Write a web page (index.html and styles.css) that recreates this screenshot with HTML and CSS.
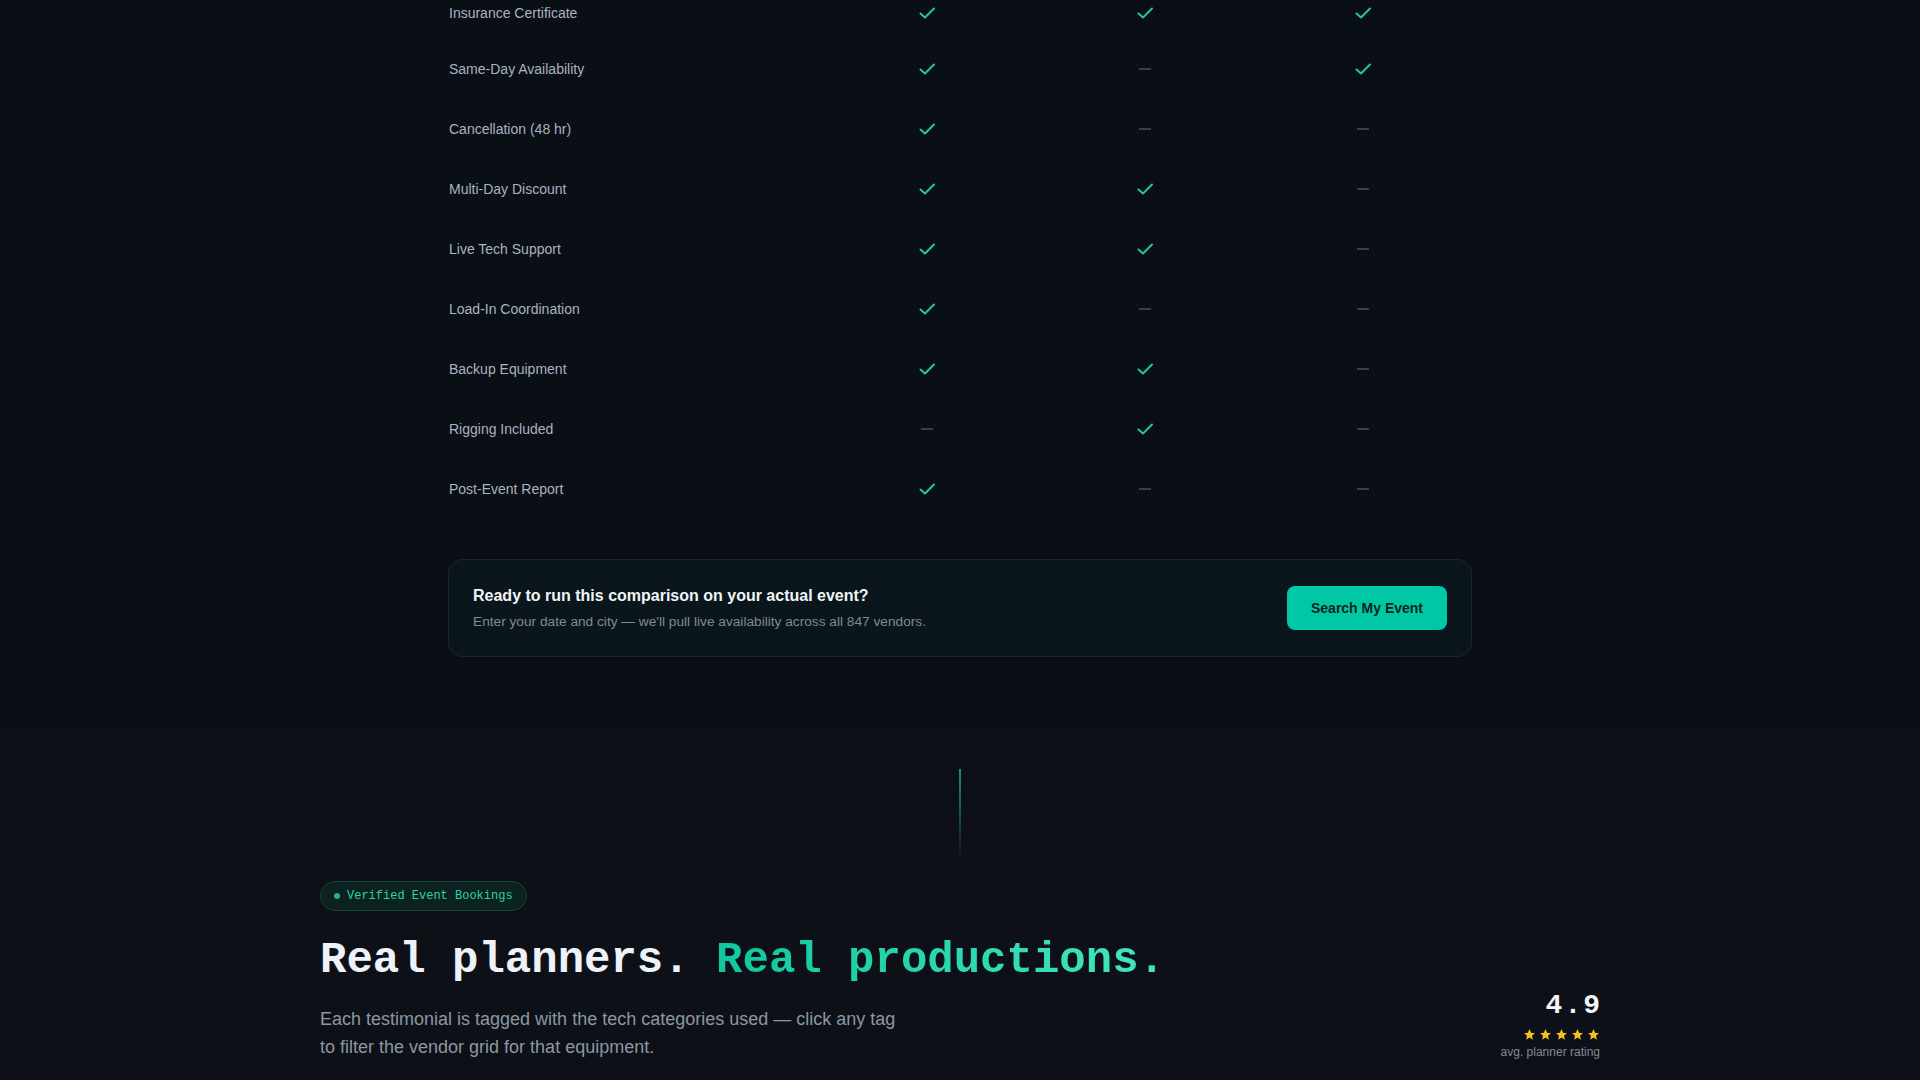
FILE: index.html
```html
<!DOCTYPE html>
<html lang="en">
<head>
    <meta charset="utf-8">
    <meta name="viewport" content="width=device-width, initial-scale=1">
    <title>Event Tech Vendors</title>
    <link rel="stylesheet" href="styles.css">
</head>
<body>
    <section class="compare">
        <div class="grid">
            <div class="row">
                <span class="feat">Insurance Certificate</span>
                <span class="cell"><svg class="yes" viewBox="0 0 16 16"><polyline points="1.5,8.5 6,12.5 15,3.5"/></svg></span>
                <span class="cell"><svg class="yes" viewBox="0 0 16 16"><polyline points="1.5,8.5 6,12.5 15,3.5"/></svg></span>
                <span class="cell"><svg class="yes" viewBox="0 0 16 16"><polyline points="1.5,8.5 6,12.5 15,3.5"/></svg></span>
            </div>
            <div class="row">
                <span class="feat">Same-Day Availability</span>
                <span class="cell"><svg class="yes" viewBox="0 0 16 16"><polyline points="1.5,8.5 6,12.5 15,3.5"/></svg></span>
                <span class="cell"><i class="no"></i></span>
                <span class="cell"><svg class="yes" viewBox="0 0 16 16"><polyline points="1.5,8.5 6,12.5 15,3.5"/></svg></span>
            </div>
            <div class="row">
                <span class="feat">Cancellation (48 hr)</span>
                <span class="cell"><svg class="yes" viewBox="0 0 16 16"><polyline points="1.5,8.5 6,12.5 15,3.5"/></svg></span>
                <span class="cell"><i class="no"></i></span>
                <span class="cell"><i class="no"></i></span>
            </div>
            <div class="row">
                <span class="feat">Multi-Day Discount</span>
                <span class="cell"><svg class="yes" viewBox="0 0 16 16"><polyline points="1.5,8.5 6,12.5 15,3.5"/></svg></span>
                <span class="cell"><svg class="yes" viewBox="0 0 16 16"><polyline points="1.5,8.5 6,12.5 15,3.5"/></svg></span>
                <span class="cell"><i class="no"></i></span>
            </div>
            <div class="row">
                <span class="feat">Live Tech Support</span>
                <span class="cell"><svg class="yes" viewBox="0 0 16 16"><polyline points="1.5,8.5 6,12.5 15,3.5"/></svg></span>
                <span class="cell"><svg class="yes" viewBox="0 0 16 16"><polyline points="1.5,8.5 6,12.5 15,3.5"/></svg></span>
                <span class="cell"><i class="no"></i></span>
            </div>
            <div class="row">
                <span class="feat">Load-In Coordination</span>
                <span class="cell"><svg class="yes" viewBox="0 0 16 16"><polyline points="1.5,8.5 6,12.5 15,3.5"/></svg></span>
                <span class="cell"><i class="no"></i></span>
                <span class="cell"><i class="no"></i></span>
            </div>
            <div class="row">
                <span class="feat">Backup Equipment</span>
                <span class="cell"><svg class="yes" viewBox="0 0 16 16"><polyline points="1.5,8.5 6,12.5 15,3.5"/></svg></span>
                <span class="cell"><svg class="yes" viewBox="0 0 16 16"><polyline points="1.5,8.5 6,12.5 15,3.5"/></svg></span>
                <span class="cell"><i class="no"></i></span>
            </div>
            <div class="row">
                <span class="feat">Rigging Included</span>
                <span class="cell"><i class="no"></i></span>
                <span class="cell"><svg class="yes" viewBox="0 0 16 16"><polyline points="1.5,8.5 6,12.5 15,3.5"/></svg></span>
                <span class="cell"><i class="no"></i></span>
            </div>
            <div class="row">
                <span class="feat">Post-Event Report</span>
                <span class="cell"><svg class="yes" viewBox="0 0 16 16"><polyline points="1.5,8.5 6,12.5 15,3.5"/></svg></span>
                <span class="cell"><i class="no"></i></span>
                <span class="cell"><i class="no"></i></span>
            </div>
        </div>

        <div class="cta">
            <div>
                <h3 class="cta-title">Ready to run this comparison on your actual event?</h3>
                <p class="cta-text">Enter your date and city — we'll pull live availability across all 847 vendors.</p>
            </div>
            <button class="cta-btn">Search My Event</button>
        </div>
    </section>

    <div class="divider"><span class="line"></span></div>

    <section class="reviews">
        <div class="reviews-head">
            <div>
                <span class="badge"><i class="dot"></i>Verified Event Bookings</span>
                <h2 class="title">Real planners. <span class="accent">Real productions.</span></h2>
                <p class="lead">Each testimonial is tagged with the tech categories used — click any tag<br>to filter the vendor grid for that equipment.</p>
            </div>
            <div class="rating">
                <div class="score">4.9</div>
                <div class="stars">
                    <svg viewBox="0 0 24 24"><path d="M12 2l2.9 6.9 7.1.6-5.4 4.7 1.7 7.3L12 17.6 5.7 21.5l1.7-7.3L2 9.5l7.1-.6z"/></svg>
                    <svg viewBox="0 0 24 24"><path d="M12 2l2.9 6.9 7.1.6-5.4 4.7 1.7 7.3L12 17.6 5.7 21.5l1.7-7.3L2 9.5l7.1-.6z"/></svg>
                    <svg viewBox="0 0 24 24"><path d="M12 2l2.9 6.9 7.1.6-5.4 4.7 1.7 7.3L12 17.6 5.7 21.5l1.7-7.3L2 9.5l7.1-.6z"/></svg>
                    <svg viewBox="0 0 24 24"><path d="M12 2l2.9 6.9 7.1.6-5.4 4.7 1.7 7.3L12 17.6 5.7 21.5l1.7-7.3L2 9.5l7.1-.6z"/></svg>
                    <svg viewBox="0 0 24 24"><path d="M12 2l2.9 6.9 7.1.6-5.4 4.7 1.7 7.3L12 17.6 5.7 21.5l1.7-7.3L2 9.5l7.1-.6z"/></svg>
                </div>
                <div class="rating-label">avg. planner rating</div>
            </div>
        </div>
    </section>
</body>
</html>
```

FILE: styles.css
```css
body {
    margin: 0;
    font-family: "Liberation Sans", Arial, sans-serif;
    background: linear-gradient(#0a0e15 0%, #0a0e15 62%, #0d1117 80%, #0d1117 100%);
    min-height: 1080px;
    color: #e6edf3;
    overflow: hidden;
}
.compare {
    max-width: 1024px;
    margin: -13px auto 0;
}
.row {
    display: grid;
    grid-template-columns: 1.7fr 1fr 1fr 1fr;
    align-items: center;
    height: 60px;
}
.row:first-child {
    height: 52px;
}
.feat {
    font-size: 14px;
    color: #a9b3c1;
    padding-left: 1px;
}
.cell {
    display: flex;
    justify-content: center;
    align-items: center;
}
.yes {
    width: 16px;
    height: 16px;
    fill: none;
    stroke: #1cc89c;
    stroke-width: 2;
    stroke-linecap: round;
    stroke-linejoin: round;
}
.no {
    display: block;
    width: 12px;
    height: 1.5px;
    background: #383f48;
}
.cta {
    margin-top: 40px;
    display: flex;
    align-items: center;
    justify-content: space-between;
    padding: 0 24px;
    height: 98px;
    box-sizing: border-box;
    background: #0a161b;
    border: 1px solid #15292c;
    border-radius: 14px;
}
.cta-title {
    margin: 0 0 9px;
    font-size: 16px;
    font-weight: 700;
    color: #f0f4f8;
}
.cta-text {
    margin: 0;
    font-size: 13.7px;
    color: #7f8a97;
}
.cta-btn {
    width: 160px;
    height: 44px;
    border: none;
    border-radius: 8px;
    background: #00c8a5;
    color: #07231e;
    font-family: "Liberation Sans", Arial, sans-serif;
    font-size: 14px;
    font-weight: 700;
    cursor: pointer;
}
.divider {
    display: flex;
    justify-content: center;
    padding: 112px 0 24px;
}
.line {
    width: 2px;
    height: 88px;
    background: linear-gradient(#1f8f78, rgba(31, 143, 120, 0.05));
}
.reviews {
    max-width: 1280px;
    margin: 0 auto;
}
.reviews-head {
    display: flex;
    justify-content: space-between;
    align-items: flex-end;
}
.badge {
    display: inline-flex;
    align-items: center;
    gap: 7px;
    height: 30px;
    padding: 0 13px;
    box-sizing: border-box;
    border: 1px solid #17443b;
    border-radius: 15px;
    background: #0b2220;
    font-family: "Liberation Mono", monospace;
    font-size: 12px;
    color: #2fd1a8;
}
.dot {
    width: 6px;
    height: 6px;
    border-radius: 50%;
    background: #1db68f;
}
.title {
    margin: 25px 0 21px;
    font-family: "Liberation Mono", monospace;
    font-size: 44px;
    line-height: 48px;
    font-weight: 700;
    color: #eef3f9;
}
.accent {
    background: linear-gradient(90deg, #0fc79e, #45e6c2);
    -webkit-background-clip: text;
    background-clip: text;
    color: transparent;
}
.lead {
    margin: 0;
    font-size: 18px;
    line-height: 28px;
    color: #8c96a4;
}
.rating {
    text-align: right;
    padding-bottom: 2px;
}
.score {
    font-family: "Liberation Mono", monospace;
    font-size: 28px;
    font-weight: 700;
    letter-spacing: 2px;
    margin-right: -2px;
    line-height: 32px;
    color: #f3f6fa;
}
.stars {
    display: flex;
    justify-content: flex-end;
    gap: 3px;
    margin-top: 6px;
}
.stars svg {
    width: 13px;
    height: 13px;
    fill: #f5c21b;
}
.rating-label {
    margin-top: 4px;
    font-size: 12px;
    color: #7f8997;
}
```
